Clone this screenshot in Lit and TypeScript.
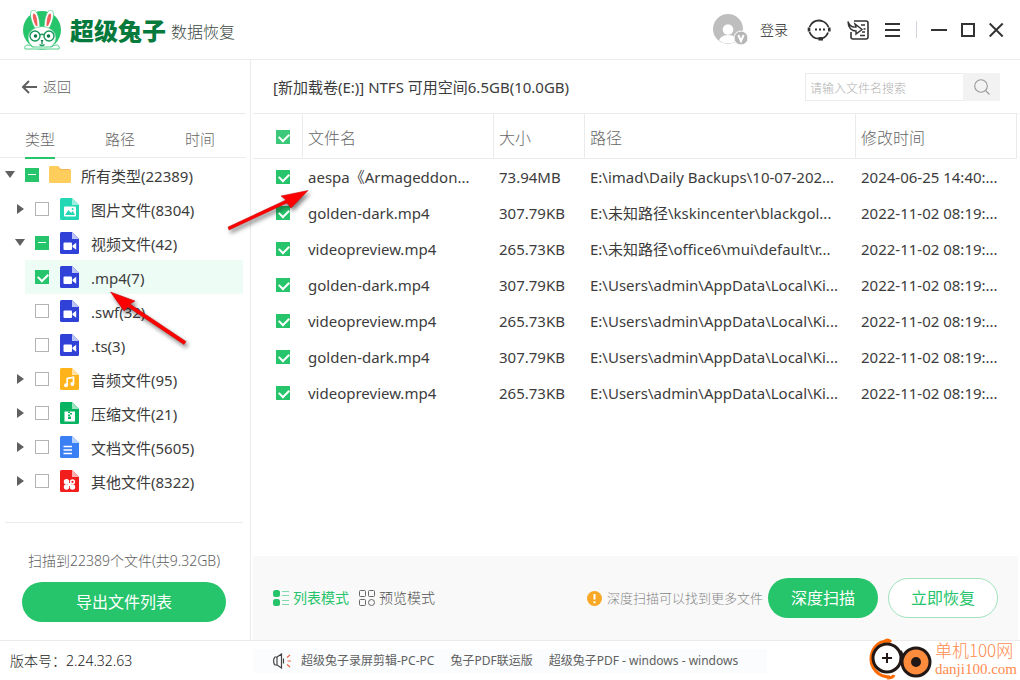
import { LitElement, html, svg, css, nothing } from "lit";
import { customElement, property, state } from "lit/decorators.js";
import { classMap } from "lit/directives/class-map.js";

const controls = css`
  * { box-sizing: border-box; }
  button { font: inherit; color: inherit; border: 0; padding: 0; background: none; cursor: pointer; }
  svg { display: block; flex: none; }
  input[type="checkbox"] {
    appearance: none; flex: none; position: relative; display: block;
    width: 14px; height: 14px; margin: 0; border: 1px solid #b4b4b4; background: #fff;
  }
  input[type="checkbox"]:checked, input[type="checkbox"]:indeterminate {
    border-color: #26c46b; background: #26c46b;
  }
  input[type="checkbox"]:checked::after {
    content: ""; position: absolute; left: 2px; top: 2px; width: 8px; height: 5px;
    border: solid #fff; border-width: 0 0 2px 2px; transform: rotate(-45deg);
  }
  input[type="checkbox"]:indeterminate::after {
    content: ""; position: absolute; left: 2px; top: 5px; width: 8px; height: 1px; background: #fff;
  }
`;

type Kind = "folder" | "image" | "video" | "audio" | "zip" | "doc" | "other";
interface Node { label: string; kind: Kind; level: "root" | "group" | "leaf"; open?: boolean; check: "all" | "some" | "none"; active?: boolean; }

const NODES: Node[] = [
  { label: "所有类型(22389)", kind: "folder", level: "root", open: true, check: "some" },
  { label: "图片文件(8304)", kind: "image", level: "group", check: "none" },
  { label: "视频文件(42)", kind: "video", level: "group", open: true, check: "some" },
  { label: ".mp4(7)", kind: "video", level: "leaf", check: "all", active: true },
  { label: ".swf(32)", kind: "video", level: "leaf", check: "none" },
  { label: ".ts(3)", kind: "video", level: "leaf", check: "none" },
  { label: "音频文件(95)", kind: "audio", level: "group", check: "none" },
  { label: "压缩文件(21)", kind: "zip", level: "group", check: "none" },
  { label: "文档文件(5605)", kind: "doc", level: "group", check: "none" },
  { label: "其他文件(8322)", kind: "other", level: "group", check: "none" },
];

const FILES = [
  ["aespa《Armageddon...", "73.94MB", "E:\\imad\\Daily Backups\\10-07-202...", "2024-06-25 14:40:..."],
  ["golden-dark.mp4", "307.79KB", "E:\\未知路径\\kskincenter\\blackgol...", "2022-11-02 08:19:..."],
  ["videopreview.mp4", "265.73KB", "E:\\未知路径\\office6\\mui\\default\\r...", "2022-11-02 08:19:..."],
  ["golden-dark.mp4", "307.79KB", "E:\\Users\\admin\\AppData\\Local\\Ki...", "2022-11-02 08:19:..."],
  ["videopreview.mp4", "265.73KB", "E:\\Users\\admin\\AppData\\Local\\Ki...", "2022-11-02 08:19:..."],
  ["golden-dark.mp4", "307.79KB", "E:\\Users\\admin\\AppData\\Local\\Ki...", "2022-11-02 08:19:..."],
  ["videopreview.mp4", "265.73KB", "E:\\Users\\admin\\AppData\\Local\\Ki...", "2022-11-02 08:19:..."],
];

const TINT: Record<Kind, [string, string]> = {
  folder: ["#ffcd5c", "#f5b455"],
  image: ["#22d8b4", "#9df0df"],
  video: ["#2f41d6", "#bcc4f5"],
  audio: ["#ffb31a", "#ffe3a6"],
  zip: ["#06b360", "#9be2be"],
  doc: ["#3b7ff5", "#bcd4fd"],
  other: ["#f21d1d", "#fbb0b0"],
};

const GLYPH: Record<Kind, unknown> = {
  folder: nothing,
  image: svg`<rect x="4" y="8.5" width="12" height="10" rx="1" fill="#fff"/><path d="M5 17l3.5-5 2.5 3 1.8-2L15 17z" fill="#22d8b4"/><circle cx="12.6" cy="11" r="1" fill="#22d8b4"/>`,
  video: svg`<rect x="3.5" y="10.5" width="8.5" height="7.5" rx="1" fill="#fff"/><path d="M12.5 13.5l3.7-2.7v7l-3.700-2.700z" fill="#fff"/>`,
  audio: svg`<path d="M7.2 17V10.5l6.3-1.2v6.5" fill="none" stroke="#fff" stroke-width="1.7"/><circle cx="6" cy="17.2" r="2" fill="#fff"/><circle cx="12.3" cy="16" r="2" fill="#fff"/>`,
  zip: svg`<rect x="4.5" y="9.5" width="10.5" height="10" fill="#fff"/><path d="M8 9.5h2v1.500h2v1.500h-2v1.500H8v-1.500h2v-1.500H8zM8 14.500h3v2.500H8z" fill="#06b360"/>`,
  doc: svg`<path d="M3.500 10.500h8.500M3.500 14h8.500M3.500 17.500h8.500" stroke="#fff" stroke-width="1.400"/>`,
  other: svg`<g fill="#fff"><circle cx="6.500" cy="11.800" r="2.700"/><circle cx="6.500" cy="17" r="2.700"/><circle cx="12.500" cy="17" r="2.700"/><path d="M8 13h3v3H8z"/></g><circle cx="12.500" cy="11.800" r="1.900" fill="none" stroke="#fff" stroke-width="1.500"/>`,
};

function fileIcon(kind: Kind) {
  const [base, fold] = TINT[kind];
  if (kind === "folder") {
    return html`<svg width="22" height="20" viewBox="0 0 22 20"><path d="M0 3.500Q0 1 2 1h7l3 3h8q2 0 2 2v3H0z" fill=${fold}/><path d="M0 3q0-2 2-2h7l2.500 4H20q2 0 2 2v9.500q0 1.500-2 1.500H2q-2 0-2-1.500z" fill=${base}/></svg>`;
  }
  return html`<svg width="22" height="22" viewBox="-1 0 22 22"><path d="M0 1.500Q0 0 1.500 0H12l7 7v13.500q0 1.500-1.500 1.500h-16Q0 22 0 20.500z" fill=${base}/><path d="M12 0l7 7h-7z" fill=${fold}/>${GLYPH[kind]}</svg>`;
}

@customElement("type-tree")
class TypeTree extends LitElement {
  @property({ attribute: false }) nodes: Node[] = NODES;
  static styles = [controls, css`
    :host { display: block; }
    ul { list-style: none; margin: 0; padding: 0; }
    li { display: flex; align-items: center; gap: 10px; height: 34px; margin-right: 7px; }
    .root { padding-left: 5px; }
    .group { padding-left: 15px; }
    .leaf { margin-left: 25px; padding-left: 10px; }
    .active { background: #edfcf5; }
    .toggle { width: 10px; height: 14px; display: grid; place-items: center; }
    label { padding-top: 2px; white-space: nowrap; }
  `];
  render() {
    return html`<ul>${this.nodes.map((n, i) => html`
      <li class=${classMap({ [n.level]: true, active: !!n.active })}>
        ${n.level === "leaf" ? nothing : html`<button class="toggle" aria-label=${n.label} aria-expanded=${n.open ? "true" : "false"}>
          <svg width="10" height="10" viewBox="0 0 10 10"><path d=${n.open ? "M0 1h10L5 8z" : "M2 0l7 5-7 5z"} fill="#606060"/></svg></button>`}
        <input type="checkbox" id="n${i}" .checked=${n.check === "all"} .indeterminate=${n.check === "some"}>
        ${fileIcon(n.kind)}
        <label for="n${i}">${n.label}</label>
      </li>`)}</ul>`;
  }
}

@customElement("file-table")
class FileTable extends LitElement {
  static styles = [controls, css`
    :host { display: block; padding-right: 1px; }
    table { width: 100%; border-collapse: separate; border-spacing: 0; table-layout: fixed; }
    th { height: 45px; padding: 4px 5px 0; font-weight: 300; font-size: 16px; text-align: left; color: #666;
      border-bottom: 1px solid #ebebeb; border-right: 1px solid #ebebeb; }
    td { height: 36px; padding: 0 5px; white-space: nowrap; overflow: hidden; }
    th.pick, td.pick { padding: 0 0 0 23px; }
    th.pick { padding-top: 2px; }
    th.pick input { opacity: .9; }
    .c0 { width: 50px; } .c1 { width: 191px; } .c2 { width: 91px; } .c4 { width: 161px; }
  `];
  render() {
    return html`<table>
      <colgroup><col class="c0"><col class="c1"><col class="c2"><col class="c3"><col class="c4"></colgroup>
      <thead><tr>
        <th class="pick"><input type="checkbox" aria-label="全选" checked></th>
        <th>文件名</th><th>大小</th><th>路径</th><th>修改时间</th>
      </tr></thead>
      <tbody>${FILES.map((f) => html`<tr>
        <td class="pick"><input type="checkbox" aria-label=${f[0]} checked></td>
        ${f.map((c) => html`<td>${c}</td>`)}
      </tr>`)}</tbody>
    </table>`;
  }
}

@customElement("app-root")
class AppRoot extends LitElement {
  @state() private tab = "类型";

  static styles = [controls, css`
    :host {
      display: grid; grid-template-rows: 60px 1fr 40px; position: relative; min-height: 100vh;
      background: #fff; color: #3c3c3c; overflow: hidden;
      font: 15px/20px "Noto Sans", "Noto Sans CJK SC", sans-serif;
    }
    header { display: flex; align-items: center; padding: 0 16px 0 22px; border-bottom: 1px solid #ebebeb; }
    .brand { margin-left: 8px; font: 900 24px/30px "Noto Sans CJK SC", sans-serif; color: #067a3c; }
    .product { margin: 4px auto 0 5px; font-size: 16px; font-weight: 300; color: #404a45; }
    .login { display: flex; align-items: center; gap: 11px; font-size: 14px; font-weight: 300; color: #222; }
    .tools { display: flex; align-items: center; gap: 16px; margin-left: 19px; }
    .sep { width: 1px; height: 17px; margin: 0 14px 0 15px; background: #d2d2da; }
    .win { display: flex; align-items: center; gap: 14px; }
    .body { display: grid; grid-template-columns: 251px 1fr; }
    aside { display: flex; flex-direction: column; border-right: 1px solid #ebebeb; }
    .back { display: flex; align-items: center; gap: 6px; height: 54px; margin-right: 4px; padding-left: 21px;
      border-bottom: 1px solid #ebebeb; color: #606060; font-size: 14px; font-weight: 300; }
    nav { display: flex; height: 44px; margin-right: 4px; border-bottom: 1px solid #ebebeb; }
    nav button { width: 80px; height: 45px; padding-top: 15px; color: #666; font-weight: 300; display: grid; justify-items: center; align-content: space-between; }
    nav button::after { content: ""; width: 30px; height: 2px; }
    nav button.on::after { background: #26c46b; }
    .summary { margin: auto 7px 0 5px; padding: 28px 17px 18px; border-top: 1px solid #ebebeb; text-align: center; color: #606060; font-size: 14px; font-weight: 300; white-space: nowrap; }
    .pill { height: 40px; border-radius: 20px; background: #26c46b; color: #fff; font-size: 16px; font-weight: 400; }
    .export { display: block; width: 100%; margin-top: 11px; }
    main { display: flex; flex-direction: column; min-width: 0; padding: 0 2px; }
    .title { display: flex; align-items: center; justify-content: space-between; height: 54px; padding: 1px 18px 0 20px; border-bottom: 1px solid #ebebeb; white-space: nowrap; }
    .search { display: flex; width: 195px; height: 28px; }
    .search input { flex: 1; min-width: 0; padding: 3px 4px 0; border: 1px solid #ebebeb; border-right: 0; font: inherit; font-size: 12px; font-weight: 300; outline: none; }
    .search input::placeholder { color: #b0b0b0; opacity: 1; }
    .search button { width: 37px; background: #f2f2f2; display: grid; place-items: center; }
    .bar { display: flex; align-items: center; height: 84px; margin-top: auto; padding: 0 20px; background: #f9f9f9; font-size: 14px; font-weight: 300; white-space: nowrap; }
    .mode { display: flex; align-items: center; gap: 3px; margin-right: 10px; color: #505050; }
    .mode.on { color: #26c46b; font-weight: 400; }
    .tip { display: flex; align-items: center; gap: 5px; margin: 0 5px 0 auto; font-size: 13px; color: #888; }
    .bar .pill { width: 110px; }
    .bar .ghost { margin-left: 10px; border: 1px solid #9fe3bd; background: #fff; color: #26c46b; }
    footer { display: flex; align-items: center; border-top: 1px solid #ebebeb; white-space: nowrap; }
    .version { width: 253px; padding-left: 10px; font-size: 14px; font-weight: 300; color: #222; }
    .news { display: flex; align-items: center; gap: 16px; min-width: 514px; height: 24px; padding: 0 20px; background: #fafcfe; font-size: 12px; color: #606060; }
    .news a { color: inherit; text-decoration: none; }
    .news svg { margin-right: -6px; }
    .arrows { position: absolute; left: 0; top: 0; pointer-events: none; filter: drop-shadow(2px 3px 2px rgba(0,0,0,.5)); }
    .mark { position: absolute; right: 3px; bottom: 0; display: flex; align-items: center; gap: 2px; color: #ff8b4d; }
    .mark div { font: 300 17px/20px "Noto Sans CJK SC", sans-serif; }
    .mark span { display: block; font: 15px/18px "Liberation Serif", serif; }
  `];

  render() {
    return html`
      <header>
        <svg width="40" height="40" viewBox="0 0 40 40">
          <circle cx="20" cy="20" r="19" fill="#26c46b"/>
          <g fill="#fff" stroke="#26c46b" stroke-width=".6">
            <path d="M15 22C9 13 6 1 11 0c5 0 7 11 7 20z"/><path d="M25 22c6-9 9-21 4-22-5 0-7 11-7 20z"/>
            <ellipse cx="20" cy="28" rx="14" ry="11.500"/></g>
          <path d="M14 16c-3-5-4-11-2.500-12.500C14 3 15.500 9 15.500 16zM26 16c3-5 4-11 2.500-12.500C26 3 24.500 9 24.500 16z" fill="#f0605e"/>
          <path d="M3 39q-1-4 3-4 3 0 4 2h20q1-2 4-2 4 0 3 4z" fill="#fff" stroke="#26c46b" stroke-width=".8"/>
          <g fill="none" stroke="#18975a" stroke-width="1.400"><circle cx="13" cy="26" r="5"/><circle cx="27" cy="26" r="5"/><path d="M18 25q2-1.500 4 0M20 31v3M17.500 34.500q2.500 2 5 0"/></g>
          <circle cx="13.500" cy="26" r="1.800" fill="#0b7a45"/><circle cx="26.500" cy="26" r="1.800" fill="#0b7a45"/><path d="M18.500 30h3L20 32z" fill="#0b7a45"/>
        </svg>
        <span class="brand">超级兔子</span><span class="product">数据恢复</span>
        <button class="login">
          <svg width="36" height="32" viewBox="0 0 36 32"><defs><clipPath id="face"><circle cx="15" cy="15" r="14.500"/></clipPath></defs>
            <circle cx="15" cy="15" r="15" fill="#bebebe"/><g clip-path="url(#face)" fill="#fff"><circle cx="15" cy="15.500" r="5.300"/><path d="M5 30q1-9 10-9t10 9z"/></g>
            <circle cx="28" cy="24" r="7" fill="#b6b6b6" stroke="#fff"/><path d="M25.300 21l2.700 6 2.700-6" fill="none" stroke="#fff" stroke-width="2"/></svg>
          登录
        </button>
        <div class="tools">
          <button aria-label="客服"><svg width="24" height="22" viewBox="0 0 24 22" fill="none" stroke="#333" stroke-width="1.800">
            <path d="M2.500 8C4.500 3.500 8 1.500 12 1.500c1.500 0 2.500.3 3.500.8M15 2c3 1 5 3 6.500 6M2.500 13c1.500 4 4.500 6.500 9.500 6.700"/><path d="M21 13.500q-1.500 4.500-6 6"/><path d="M2 8.500v4M22.300 8.500v4" stroke-width="2.600"/><path d="M11.500 19.800h4.500" stroke-width="3.500"/>
            <path d="M8 10.500h2M12 10.500h2M16 10.500h2"/></svg></button>
          <button aria-label="导入"><svg width="22" height="20" viewBox="0 0 22 20" fill="none" stroke="#333" stroke-width="1.600">
            <path d="M7 1h12q2 0 2 2v14q0 2-2 2H6q-2 0-2-2v-5"/><path d="M1 1.500C2 5 5 7.500 9 7l-1-3 7 5.500-6 4.500v-3C5 11 1 8 1 1.500z" stroke-width="1.400"/><path d="M14 5h4M16.500 9h2M15 12h3M13 15.500h5" stroke-width="1.400"/></svg></button>
          <button aria-label="菜单"><svg width="16" height="16" viewBox="0 0 16 16"><path d="M0 2h15M0 8h15M0 14h15" stroke="#333" stroke-width="2"/></svg></button>
        </div>
        <span class="sep"></span>
        <div class="win">
          <button aria-label="最小化"><svg width="16" height="16" viewBox="0 0 16 16"><path d="M0 8h16" stroke="#333" stroke-width="2"/></svg></button>
          <button aria-label="最大化"><svg width="14" height="14" viewBox="0 0 14 14"><path d="M1 1h12v12H1z" fill="none" stroke="#333" stroke-width="2"/></svg></button>
          <button aria-label="关闭"><svg width="15" height="14" viewBox="0 0 15 14"><path d="M.7.5l13 13M13.700.5l-13 13" stroke="#333" stroke-width="2"/></svg></button>
        </div>
      </header>
      <div class="body">
        <aside>
          <button class="back"><svg width="16" height="14" viewBox="0 0 16 14" fill="none" stroke="#606060" stroke-width="2"><path d="M16 7H2M8 1L2 7l6 6"/></svg>返回</button>
          <nav>${["类型", "路径", "时间"].map((t) => html`<button class=${classMap({ on: t === this.tab })} @click=${() => (this.tab = t)}>${t}</button>`)}</nav>
          <type-tree></type-tree>
          <div class="summary">扫描到22389个文件(共9.32GB)<button class="pill export">导出文件列表</button></div>
        </aside>
        <main>
          <div class="title"><span>[新加载卷(E:)] NTFS 可用空间6.5GB(10.0GB)</span>
            <div class="search"><input type="text" aria-label="搜索" placeholder="请输入文件名搜索">
              <button aria-label="搜索"><svg width="16" height="16" viewBox="0 0 16 16" fill="none" stroke="#999" stroke-width="1.100"><circle cx="7" cy="7" r="6.300"/><path d="M11.500 11.500l4 4"/></svg></button></div>
          </div>
          <file-table></file-table>
          <div class="bar">
            <button class="mode on"><svg width="17" height="16" viewBox="0 0 17 16"><g fill="#26c46b"><rect width="7" height="7" rx="2.500"/><rect y="9" width="7" height="7" rx="2.500"/></g><path d="M9 1.500h7M9 5.500h7M9 10.500h7M9 14.500h7" stroke="#7fdba8" stroke-width="1.200"/></svg>列表模式</button>
            <button class="mode"><svg width="17" height="16" viewBox="0 0 17 16" fill="none" stroke="#666"><rect x=".5" y=".5" width="6" height="6" rx="1"/><rect x="9.500" y=".5" width="6" height="6" rx="1"/><rect x=".5" y="9.500" width="6" height="6" rx="1"/><circle cx="12.500" cy="12.500" r="3"/></svg>预览模式</button>
            <span class="tip"><svg width="15" height="15" viewBox="0 0 15 15"><circle cx="7.500" cy="7.500" r="7.500" fill="#f9a825"/><path d="M7.500 3v5.500M7.500 10.300v2" stroke="#fff" stroke-width="2"/></svg>深度扫描可以找到更多文件</span>
            <button class="pill">深度扫描</button><button class="pill ghost">立即恢复</button>
          </div>
        </main>
      </div>
      <footer>
        <span class="version">版本号：2.24.32.63</span>
        <div class="news">
          <svg width="18" height="16" viewBox="0 0 18 16" fill="none" stroke="#444" stroke-width="1.200"><path d="M4 4L8.500 1v14L4 12zM4 4H2Q.6 5 .6 8T2 12h2M10.500 5.500v5"/><path d="M14 4.500L17 2M14.500 8H18M14 11.500l3 2.500" stroke="#f0603c"/></svg>
          <a href="#">超级兔子录屏剪辑-PC-PC</a><a href="#">兔子PDF联运版</a><a href="#">超级兔子PDF - windows - windows</a>
        </div>
      </footer>
      <svg class="arrows" width="320" height="360" viewBox="0 0 320 360" fill="#f00" stroke="#c00000" stroke-width=".5">
        <path d="M228 227L286 200 281 196 308 190.500 291 208 287 203 229 230z"/>
        <path d="M186 341.500L130 304 135 301 110.500 292 124 311 128 307 184 344.500z"/>
      </svg>
      <div class="mark">
        <svg width="64" height="42" viewBox="0 0 64 42">
          <g fill="none" stroke="#ff6a00" stroke-width="3"><path d="M21 3.500C8 2 2 12 2 21s7 18 19 18M15 4q3-4 7 0M18 40q6 0 7-3"/></g>
          <circle cx="18" cy="20" r="14" fill="#fff" stroke="#221815" stroke-width="3"/><path d="M13 20h10M18 15v10" stroke="#221815" stroke-width="2"/>
          <circle cx="47" cy="24" r="14" fill="#ff8b3d" stroke="#221815" stroke-width="3"/><circle cx="47" cy="24" r="5" fill="#221815"/><path d="M31 13q3 3 1 9" fill="none" stroke="#221815" stroke-width="3"/>
        </svg>
        <div>单机100网<span>danji100.com</span></div>
      </div>`;
  }
}
